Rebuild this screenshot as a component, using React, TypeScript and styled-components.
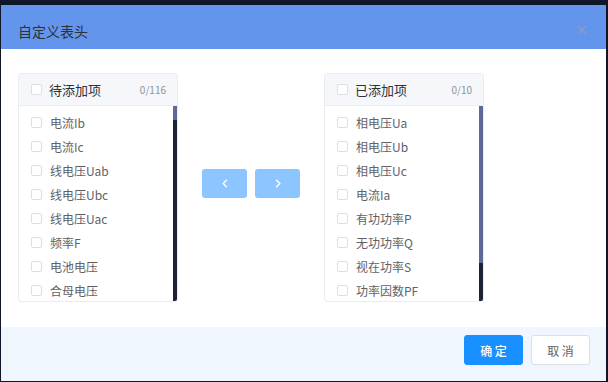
import React from "react";
import styled, { createGlobalStyle } from "styled-components";

const Global = createGlobalStyle`
  html, body { margin: 0; padding: 0; background: #10152a; }
  body { font-family: "Noto Sans CJK SC", "Noto Sans", sans-serif; }
  * { box-sizing: border-box; }
`;

const Page = styled.div`
  width: 608px;
  height: 382px;
  padding: 5px 2px 1px 1px;
  background: #10152a;
`;

const Dialog = styled.div`
  width: 605px;
  height: 376px;
  display: flex;
  flex-direction: column;
  background: #fff;
`;

const Header = styled.div`
  height: 44px;
  background: #6495ed;
  display: flex;
  align-items: center;
  justify-content: space-between;
  padding: 7px 19px 0 17px;
`;

const Title = styled.span`
  font-size: 14px;
  line-height: 20px;
  color: #303133;
`;

const Close = styled.span`
  display: flex;
  width: 10px;
  height: 10px;
  margin-top: -2px;
`;

const Body = styled.div`
  flex: 1;
  display: flex;
  align-items: center;
  padding: 24px 17px 25px;
`;

const Panel = styled.div`
  width: 160px;
  height: 229px;
  border: 1px solid #e9ecf2;
  border-radius: 3px;
  display: flex;
  flex-direction: column;
  overflow: hidden;
`;

const PanelHead = styled.div`
  height: 32px;
  flex: none;
  background: #f5f7fa;
  border-bottom: 1px solid #e9ecf2;
  display: flex;
  align-items: center;
  padding: 0 11px 0 12px;
`;

const HeadTitle = styled.span`
  font-size: 13px;
  color: #303133;
  margin-left: 7px;
  flex: 1;
  line-height: 18px;
`;

const Count = styled.span`
  font-size: 10px;
  color: #909399;
`;

const Box = styled.span`
  width: 11px;
  height: 11px;
  border: 1px solid #dcdfe6;
  border-radius: 2px;
  background: #fff;
  flex: none;
`;

const ListArea = styled.div`
  flex: 1;
  display: flex;
  min-height: 0;
`;

const Rows = styled.div`
  flex: 1;
  overflow-y: auto;
  padding-top: 4px;
  scrollbar-width: none;
  &::-webkit-scrollbar { display: none; }
`;

const Track = styled.div`
  width: 4px;
  flex: none;
  background: #1e2238;
`;

const Thumb = styled.div`
  width: 4px;
  background: #5d6a99;
`;

const Item = styled.div`
  height: 24px;
  display: flex;
  align-items: center;
  padding-left: 12px;
`;

const ItemText = styled.span`
  font-size: 12px;
  color: #606266;
  margin-left: 8px;
  white-space: nowrap;
`;

const Buttons = styled.div`
  display: flex;
  gap: 8px;
  margin: 0 24px 8px;
`;

const ArrowButton = styled.div`
  width: 45px;
  height: 29px;
  border-radius: 3px;
  background: #8cc5ff;
  display: flex;
  align-items: center;
  justify-content: center;
`;

const Footer = styled.div`
  height: 54px;
  flex: none;
  background: #eff6fe;
  display: flex;
  justify-content: flex-end;
  align-items: flex-start;
  gap: 8px;
  padding: 8px 16px 0 0;
`;

const Btn = styled.div<{ $primary?: boolean }>`
  width: 59px;
  height: 30px;
  border-radius: 3px;
  display: flex;
  align-items: center;
  justify-content: center;
  font-size: 12px;
  background: ${(p) => (p.$primary ? "#1890ff" : "#fff")};
  color: ${(p) => (p.$primary ? "#fff" : "#606266")};
  border: 1px solid ${(p) => (p.$primary ? "#1890ff" : "#dcdfe6")};
  font-weight: ${(p) => (p.$primary ? 500 : 400)};
`;

const leftItems = [
  "电流Ib",
  "电流Ic",
  "线电压Uab",
  "线电压Ubc",
  "线电压Uac",
  "频率F",
  "电池电压",
  "合母电压",
  ...Array.from({ length: 108 }, (_, i) => `测量项${i + 9}`),
];

const rightItems = [
  "相电压Ua",
  "相电压Ub",
  "相电压Uc",
  "电流Ia",
  "有功功率P",
  "无功功率Q",
  "视在功率S",
  "功率因数PF",
  "正向有功电能",
  "反向有功电能",
];

const ROW = 24;
const VIEW = 196;

function TransferPanel({ title, items }: { title: string; items: string[] }) {
  const contentHeight = items.length * ROW + 4;
  const thumb = Math.max(10, (VIEW * VIEW) / contentHeight);
  return (
    <Panel>
      <PanelHead>
        <Box />
        <HeadTitle>{title}</HeadTitle>
        <Count>0/{items.length}</Count>
      </PanelHead>
      <ListArea>
        <Rows>
          {items.map((t) => (
            <Item key={t}>
              <Box />
              <ItemText>{t}</ItemText>
            </Item>
          ))}
        </Rows>
        <Track>
          <Thumb style={{ height: thumb }} />
        </Track>
      </ListArea>
    </Panel>
  );
}

const Chevron = ({ dir }: { dir: "left" | "right" }) => (
  <svg width="6" height="9" viewBox="0 0 6 9">
    <path
      d={dir === "left" ? "M4.8 0.8 L1.2 4.5 L4.8 8.2" : "M1.2 0.8 L4.8 4.5 L1.2 8.2"}
      fill="none"
      stroke="#fff"
      strokeWidth="1.4"
    />
  </svg>
);

export default function App() {
  return (
    <Page>
      <Global />
      <Dialog>
        <Header>
          <Title>自定义表头</Title>
          <Close>
            <svg width="10" height="10" viewBox="0 0 10 10">
              <path d="M1 1 L9 9 M9 1 L1 9" stroke="#8f9bb8" strokeWidth="1.2" />
            </svg>
          </Close>
        </Header>
        <Body>
          <TransferPanel title="待添加项" items={leftItems} />
          <Buttons>
            <ArrowButton>
              <Chevron dir="left" />
            </ArrowButton>
            <ArrowButton>
              <Chevron dir="right" />
            </ArrowButton>
          </Buttons>
          <TransferPanel title="已添加项" items={rightItems} />
        </Body>
        <Footer>
          <Btn $primary>确 定</Btn>
          <Btn>取 消</Btn>
        </Footer>
      </Dialog>
    </Page>
  );
}
